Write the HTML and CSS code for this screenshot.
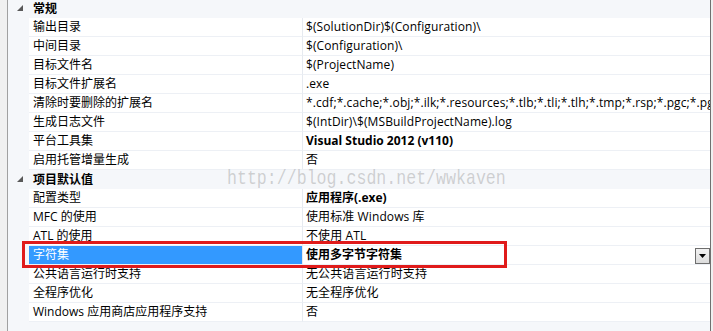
FILE: index.html
```html
<!DOCTYPE html>
<html lang="zh-CN">
<head>
<meta charset="utf-8">
<title>属性页</title>
<link rel="stylesheet" href="styles.css">
</head>
<body>
<div class="frame">
  <div class="grid">
    <div class="cat"><span class="tri"><svg width="6" height="6" viewBox="0 0 6 6"><polygon points="0,6 6,6 6,0" fill="#595959"/></svg></span><span class="cat-name">常规</span></div>
    <div class="row"><div class="gut"></div><div class="name">输出目录</div><div class="val">$(SolutionDir)$(Configuration)\</div></div>
    <div class="row"><div class="gut"></div><div class="name">中间目录</div><div class="val">$(Configuration)\</div></div>
    <div class="row"><div class="gut"></div><div class="name">目标文件名</div><div class="val">$(ProjectName)</div></div>
    <div class="row"><div class="gut"></div><div class="name">目标文件扩展名</div><div class="val">.exe</div></div>
    <div class="row"><div class="gut"></div><div class="name">清除时要删除的扩展名</div><div class="val">*.cdf;*.cache;*.obj;*.ilk;*.resources;*.tlb;*.tli;*.tlh;*.tmp;*.rsp;*.pgc;*.pgd;*</div></div>
    <div class="row"><div class="gut"></div><div class="name">生成日志文件</div><div class="val">$(IntDir)\$(MSBuildProjectName).log</div></div>
    <div class="row"><div class="gut"></div><div class="name">平台工具集</div><div class="val bold">Visual Studio 2012 (v110)</div></div>
    <div class="row"><div class="gut"></div><div class="name">启用托管增量生成</div><div class="val">否</div></div>
    <div class="cat"><span class="tri"><svg width="6" height="6" viewBox="0 0 6 6"><polygon points="0,6 6,6 6,0" fill="#595959"/></svg></span><span class="cat-name">项目默认值</span></div>
    <div class="row"><div class="gut"></div><div class="name">配置类型</div><div class="val bold">应用程序(.exe)</div></div>
    <div class="row"><div class="gut"></div><div class="name">MFC 的使用</div><div class="val">使用标准 Windows 库</div></div>
    <div class="row"><div class="gut"></div><div class="name">ATL 的使用</div><div class="val">不使用 ATL</div></div>
    <div class="row sel"><div class="gut"></div><div class="name">字符集</div><div class="val bold"><span class="vtext">使用多字节字符集</span><span class="drop"><svg width="7" height="4" viewBox="0 0 7 4"><polygon points="0,0 7,0 3.5,4" fill="#000"/></svg></span></div></div>
    <div class="row"><div class="gut"></div><div class="name">公共语言运行时支持</div><div class="val">无公共语言运行时支持</div></div>
    <div class="row"><div class="gut"></div><div class="name">全程序优化</div><div class="val">无全程序优化</div></div>
    <div class="row"><div class="gut"></div><div class="name">Windows 应用商店应用程序支持</div><div class="val">否</div></div>
    <div class="mark">http://blog.csdn.net/wwkaven</div>
    <div class="redbox"></div>
  </div>
</div>
</body>
</html>
```
FILE: styles.css
```css
html, body {
  margin: 0;
  padding: 0;
  background: #f0f0f0;
}
body {
  width: 713px;
  height: 331px;
  overflow: hidden;
  font-family: "Open Sans", "Noto Sans CJK SC", sans-serif;
  font-size: 12px;
  color: #000;
}
.frame {
  display: flex;
  height: 331px;
  padding-left: 7px;
  padding-right: 2px;
  background: #f0f0f0;
}
.grid {
  position: relative;
  flex: 1;
  border-left: 1px solid #a0a0a0;
  border-right: 1px solid #707070;
  background: #f5f7fa;
  display: flex;
  flex-direction: column;
  margin-top: -1px;
  overflow: hidden;
}
.cat {
  height: 19px;
  display: flex;
  align-items: center;
  background: #f5f7fa;
  flex: none;
}
.tri {
  width: 25px;
  display: flex;
  padding-left: 9px;
  box-sizing: border-box;
  margin-top: -2px;
}
.tri svg { display: block; }
.cat-name {
  font-weight: bold;
  line-height: 18px;
}
.row {
  display: grid;
  grid-template-columns: 21px 273px 1fr;
  height: 19px;
  flex: none;
}
.gut { background: #f5f7fa; }
.name, .val {
  background: #fff;
  border-bottom: 1px solid #edf0f5;
  line-height: 18px;
  height: 18px;
  white-space: nowrap;
  overflow: hidden;
}
.name { padding-left: 4px; }
.val {
  border-left: 1px solid #e6eaf0;
  padding-left: 3px;
  display: flex;
  align-items: center;
  letter-spacing: 0.1px;
}
.bold { font-weight: bold; letter-spacing: 0; }
.sel .name {
  background: #3399ff;
  color: #fff;
}
.vtext { flex: 1; }
.drop {
  flex: none;
  width: 15px;
  height: 16px;
  border: 1px solid #6e6e6e;
  background: linear-gradient(#f2f2f2, #dcdcdc);
  display: flex;
  align-items: center;
  justify-content: center;
  box-sizing: border-box;
  margin-top: 1px;
}
.drop svg { display: block; margin-top: 1px; }
.mark {
  position: absolute;
  left: 219px;
  top: 168px;
  font-family: "Liberation Mono", monospace;
  font-size: 21px;
  color: rgba(140, 140, 140, 0.38);
  transform: scaleX(0.79);
  transform-origin: left top;
  white-space: nowrap;
  pointer-events: none;
}
.redbox {
  position: absolute;
  left: 14px;
  top: 242px;
  width: 479px;
  height: 21px;
  border: 3px solid #e01b1b;
  pointer-events: none;
}
```
